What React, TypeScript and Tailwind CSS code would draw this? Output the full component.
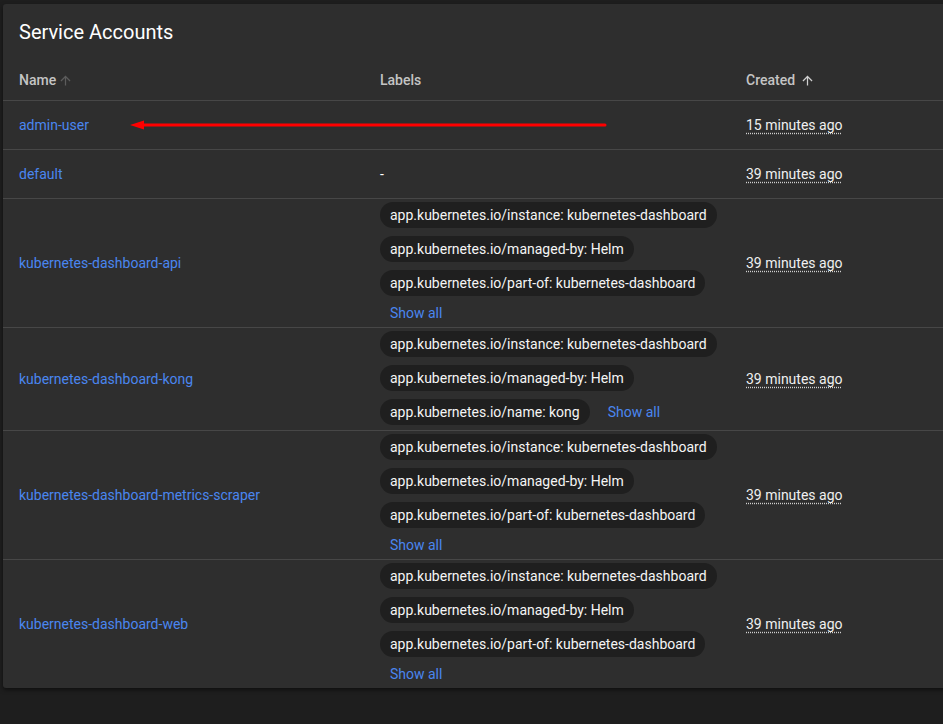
import React from "react";

const ArrowUp = ({ className }: { className?: string }) => (
  <svg viewBox="0 0 24 24" className={className} fill="currentColor">
    <path d="M4 12l1.41 1.41L11 7.83V20h2V7.83l5.58 5.59L20 12l-8-8-8 8z" />
  </svg>
);

type Row = { name: string; labels: string[]; showAll: boolean; created: string; dash?: boolean };

const common3 = [
  "app.kubernetes.io/instance: kubernetes-dashboard",
  "app.kubernetes.io/managed-by: Helm",
  "app.kubernetes.io/part-of: kubernetes-dashboard",
];

const rows: Row[] = [
  { name: "admin-user", labels: [], showAll: false, created: "15 minutes ago" },
  { name: "default", labels: [], showAll: false, created: "39 minutes ago", dash: true },
  { name: "kubernetes-dashboard-api", labels: common3, showAll: true, created: "39 minutes ago" },
  {
    name: "kubernetes-dashboard-kong",
    labels: [
      "app.kubernetes.io/instance: kubernetes-dashboard",
      "app.kubernetes.io/managed-by: Helm",
      "app.kubernetes.io/name: kong",
    ],
    showAll: true,
    created: "39 minutes ago",
  },
  { name: "kubernetes-dashboard-metrics-scraper", labels: common3, showAll: true, created: "39 minutes ago" },
  { name: "kubernetes-dashboard-web", labels: common3, showAll: true, created: "39 minutes ago" },
];

export default function App() {
  return (
    <div
      className="w-[943px] h-[724px] overflow-hidden bg-[#1e1e1e] pt-[4px] pl-[3px]"
      style={{ fontFamily: "Roboto, 'Liberation Sans', sans-serif" }}
    >
      <div className="relative w-[960px] bg-[#2e2e2e] rounded-[3px] shadow-[0_2px_4px_rgba(0,0,0,0.5)]">
        <div className="h-[56px] flex items-center pl-[16px] text-[20px] text-white">Service Accounts</div>
        <div className="grid grid-cols-[361px_366px_1fr] h-[41px] pt-[1px] items-center border-b border-[#474747] text-[14px] font-medium text-[#c4c4c4]">
          <div className="pl-[16px] flex items-center gap-[2px]">
            Name <ArrowUp className="w-[15px] h-[15px] text-[#5c5c5c]" />
          </div>
          <div className="pl-[16px]">Labels</div>
          <div className="pl-[16px] flex items-center gap-[5px]">
            Created <ArrowUp className="w-[15px] h-[15px] text-[#d0d0d0]" />
          </div>
        </div>
        {rows.map((r, i) => (
          <div
            key={r.name}
            className={`grid grid-cols-[361px_366px_1fr] items-center text-[14px] ${
              i < rows.length - 1 ? "border-b border-[#474747]" : ""
            } ${r.labels.length ? "" : "h-[49px]"}`}
          >
            <div className="pl-[16px] text-[#4a86f0]">{r.name}</div>
            <div className={`pl-[16px] ${r.labels.length ? "pt-[3px] pb-[5px]" : ""}`}>
              {r.dash && <span className="text-white">-</span>}
              {r.labels.length > 0 && (
                <div className="flex flex-wrap items-center gap-x-[8px] gap-y-[8px] w-[350px]">
                  {r.labels.map((l) => (
                    <span
                      key={l}
                      className="h-[26px] inline-flex items-center px-[10px] rounded-full bg-[#1f1f1f] text-[#f5f5f5] whitespace-nowrap"
                    >
                      {l}
                    </span>
                  ))}
                  {r.showAll && (
                    <span className="h-[18px] inline-flex items-center px-[10px] text-[#4a86f0]">Show all</span>
                  )}
                </div>
              )}
            </div>
            <div className="pl-[16px]">
              <span className="text-[#f0f0f0] underline decoration-dotted decoration-[#d0d0d0] underline-offset-[3px]">
                {r.created}
              </span>
            </div>
          </div>
        ))}
        <svg
          className="absolute left-[127px] top-[116px]"
          width="480"
          height="12"
          viewBox="0 0 480 12"
        >
          <line x1="12" y1="5" x2="475" y2="5" stroke="#ff0000" strokeWidth="3" strokeLinecap="round" />
          <polygon points="0,5 14,0.5 14,9.5" fill="#ff0000" />
        </svg>
      </div>
    </div>
  );
}
